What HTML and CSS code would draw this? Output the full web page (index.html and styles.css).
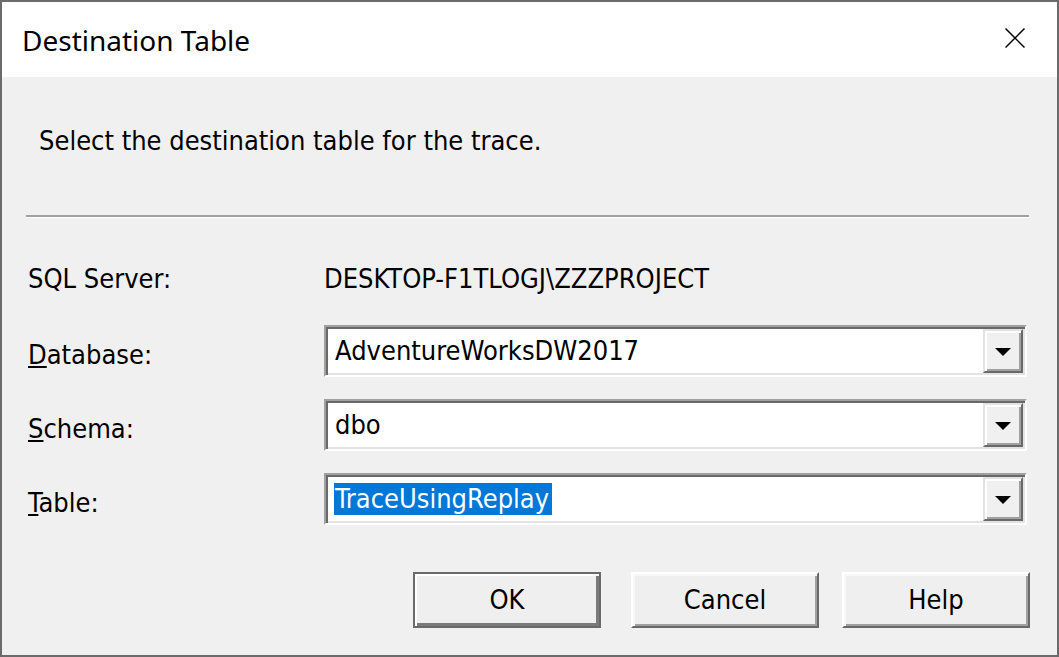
FILE: index.html
```html
<!DOCTYPE html>
<html lang="en">
<head>
<meta charset="utf-8">
<title>Destination Table</title>
<link rel="stylesheet" href="styles.css">
</head>
<body>
<div class="window">
  <div class="titlebar">
    <div class="title">Destination Table</div>
    <svg class="close" width="20" height="20" viewBox="0 0 20 20" aria-label="Close">
      <path d="M0.5 0.5 L19.5 19.5 M19.5 0.5 L0.5 19.5" stroke="#000" stroke-width="1.5" fill="none"/>
    </svg>
  </div>
  <div class="content">
    <div class="intro">Select the destination table for the trace.</div>
    <div class="separator"></div>
    <div class="form">
      <div class="label first">SQL Server:</div>
      <div class="value first">DESKTOP-F1TLOGJ\ZZZPROJECT</div>

      <div class="label"><u>D</u>atabase:</div>
      <div class="combo">
        <div class="combo-text">AdventureWorksDW2017</div>
        <div class="combo-btn"><span class="arrow"></span></div>
      </div>

      <div class="label"><u>S</u>chema:</div>
      <div class="combo">
        <div class="combo-text">dbo</div>
        <div class="combo-btn"><span class="arrow"></span></div>
      </div>

      <div class="label"><u>T</u>able:</div>
      <div class="combo">
        <div class="combo-text sel"><span class="selected">TraceUsingReplay</span></div>
        <div class="combo-btn"><span class="arrow"></span></div>
      </div>
    </div>
    <div class="buttons">
      <div class="btn default">OK</div>
      <div class="btn">Cancel</div>
      <div class="btn">Help</div>
    </div>
  </div>
</div>
</body>
</html>
```

FILE: styles.css
```css
html, body {
  margin: 0;
  padding: 0;
  background: #f0f0f0;
}

.window {
  width: 1059px;
  height: 657px;
  box-sizing: border-box;
  border: 2px solid #6b6b6b;
  display: flex;
  flex-direction: column;
  background: #f0f0f0;
  font-family: "DejaVu Sans Condensed", "DejaVu Sans", sans-serif;
  font-stretch: condensed;
  font-size: 27px;
  color: #000;
}

.titlebar {
  height: 75px;
  flex: none;
  background: #ffffff;
  display: flex;
  align-items: flex-start;
}

.title {
  font-family: "Noto Sans", "Open Sans", sans-serif;
  font-stretch: normal;
  font-size: 28px;
  line-height: 36px;
  padding-top: 20px;
  padding-left: 20px;
}

.close {
  margin-left: auto;
  margin-right: 32px;
  margin-top: 26px;
  display: block;
}

.content {
  flex: 1;
  display: flex;
  flex-direction: column;
}

.intro {
  line-height: 30px;
  margin-top: 49px;
  padding-left: 37px;
}

.separator {
  margin-top: 59px;
  margin-left: 24px;
  width: 1003px;
  height: 2px;
  background: #a0a0a0;
  border-bottom: 1px solid #ffffff;
}

.form {
  margin-top: 46px;
  padding-left: 26px;
  padding-right: 30px;
  display: grid;
  grid-template-columns: 296px 1fr;
  grid-template-rows: 39px 52px 52px 52px;
  row-gap: 22px;
}

.label, .value {
  line-height: 30px;
  padding-top: 15px;
}

.label.first, .value.first {
  padding-top: 0;
}

.combo {
  box-sizing: border-box;
  height: 52px;
  border: 2px solid;
  border-color: #a0a0a0 #ffffff #ffffff #a0a0a0;
  box-shadow: inset 2px 2px 0 #696969, inset -2px -2px 0 #e3e3e3;
  background: #ffffff;
  padding: 2px;
  display: flex;
}

.combo-text {
  flex: 1;
  line-height: 30px;
  padding-left: 7px;
  padding-top: 7px;
}

.combo-text.sel {
  padding-left: 6px;
}

.selected {
  display: inline-block;
  background: #0078d7;
  color: #ffffff;
  line-height: 32px;
  margin-top: -2px;
  padding: 0 3px 0 1px;
}

.combo-btn {
  width: 40px;
  box-sizing: border-box;
  background: #f0f0f0;
  border: 2px solid;
  border-color: #e3e3e3 #696969 #696969 #e3e3e3;
  box-shadow: inset 2px 2px 0 #ffffff, inset -2px -2px 0 #a0a0a0;
  display: flex;
  align-items: center;
  justify-content: center;
}

.arrow {
  width: 0;
  height: 0;
  border-left: 8px solid transparent;
  border-right: 8px solid transparent;
  border-top: 8px solid #000;
  margin-top: 2px;
}

.buttons {
  margin-top: 47px;
  display: flex;
  justify-content: flex-end;
  padding-right: 27px;
  gap: 23px;
}

.btn {
  box-sizing: border-box;
  width: 188px;
  height: 56px;
  background: #efefef;
  border: 2px solid;
  border-color: #ffffff #696969 #696969 #ffffff;
  box-shadow: inset 2px 2px 0 #f8f8f8, inset -2px -2px 0 #a0a0a0;
  display: flex;
  align-items: center;
  justify-content: center;
  line-height: 30px;
}

.btn.default {
  margin-right: 7px;
  border-color: #6a6a6a;
  box-shadow: inset 2px 2px 0 #ffffff, inset -3px -3px 0 #7a7a7a;
}
```
